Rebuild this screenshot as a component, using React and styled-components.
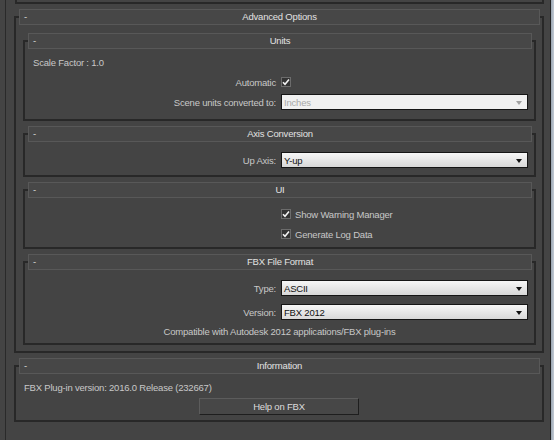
import React from "react";
import styled, { createGlobalStyle } from "styled-components";

const Global = createGlobalStyle`
  html, body { margin: 0; padding: 0; background: #444444; }
  body {
    font-family: "Liberation Sans", Arial, sans-serif;
    font-size: 9.5px;
    letter-spacing: -0.2px;
    color: #c8c8c8;
  }
  * { box-sizing: border-box; }
`;

const Window = styled.div`
  display: flex;
  width: 554px;
  height: 440px;
  overflow: hidden;
  background: #444444;
`;

const Main = styled.div`
  flex: 1;
  padding-left: 5px;
  display: flex;
`;

const Column = styled.div`
  flex: 1;
  border-left: 1px solid #2a2a2a;
  border-right: 1px solid #242424;
  display: flex;
  flex-direction: column;
`;

const Edge = styled.div`
  width: 3px;
  background: linear-gradient(to right, #9aa6b2, #c4ccd6);
`;

const Stub = styled.div`
  height: 4px;
  margin: 0 6px 0 9px;
  border: 2px solid #282828;
  border-top: none;
`;

const Frame = styled.div`
  margin: ${(p) => p.$mt}px ${(p) => p.$mr}px 0 ${(p) => p.$ml}px;
  border: 2px solid #282828;
  display: flex;
  flex-direction: column;
  padding-bottom: ${(p) => p.$pb}px;
`;

const Header = styled.div`
  position: relative;
  height: 16px;
  margin: -9px 2px 0 3px;
  background: #474747;
  border: 1px solid #585858;
  display: flex;
  align-items: center;
  justify-content: center;
  color: #e2e2e2;
  line-height: 14px;
`;

const Dash = styled.span`
  position: absolute;
  left: 4px;
  top: 0;
  color: #d8d8d8;
`;

const Fields = styled.div`
  display: grid;
  grid-template-columns: 1fr 247px;
  column-gap: 5px;
  row-gap: ${(p) => p.$gap}px;
  grid-auto-rows: 16px;
  padding: ${(p) => p.$pt}px 6px ${(p) => p.$pb}px 0;
`;

const Full = styled.div`
  grid-column: 1 / -1;
  display: flex;
  align-items: center;
  padding-left: 8px;
  white-space: nowrap;
`;

const Note = styled.div`
  height: 14px;
  margin: 4px 0 5px;
  display: flex;
  align-items: center;
  justify-content: center;
  white-space: nowrap;
`;

const Label = styled.div`
  display: flex;
  align-items: center;
  justify-content: flex-end;
  white-space: nowrap;
  color: #c8c8c8;
`;

const Control = styled.div`
  display: flex;
  align-items: center;
  gap: 4px;
  white-space: nowrap;
`;

const Select = styled.div`
  position: relative;
  width: 100%;
  height: 16px;
  border: 1px solid #151515;
  background: ${(p) =>
    p.$disabled ? "#f0f0f0" : "linear-gradient(#f6f6f6, #e4e4e4 60%, #d8d8d8)"};
  color: ${(p) => (p.$disabled ? "#a8a8a8" : "#101010")};
  display: flex;
  align-items: center;
  padding-left: 2px;
`;

const Arrow = styled.span`
  position: absolute;
  right: 5px;
  top: 6px;
  width: 0;
  height: 0;
  border-left: 3.5px solid transparent;
  border-right: 3.5px solid transparent;
  border-top: 4px solid ${(p) => (p.$disabled ? "#a0a0a0" : "#111")};
`;

const Box = styled.span`
  width: 10px;
  height: 10px;
  background: #343434;
  border: 1px solid #6c6c6c;
  display: inline-flex;
  align-items: center;
  justify-content: center;
  flex: none;
`;

const InfoBody = styled.div`
  display: flex;
  flex-direction: column;
  padding: 6px 0 0 8px;
  gap: 4px;
`;

const InfoText = styled.div`
  height: 14px;
  display: flex;
  align-items: center;
  white-space: nowrap;
`;

const Button = styled.div`
  align-self: center;
  margin-left: -8px;
  width: 160px;
  height: 17px;
  background: #474747;
  border: 1px solid;
  border-color: #5c5c5c #1e1e1e #1e1e1e #5c5c5c;
  display: flex;
  align-items: center;
  justify-content: center;
  color: #dcdcdc;
`;

const Check = () => (
  <Box>
    <svg width="8" height="8" viewBox="0 0 8 8">
      <path d="M1 4.2 L3 6.3 L7 1.5" fill="none" stroke="#f2f2f2" strokeWidth="1.6" />
    </svg>
  </Box>
);

const Dropdown = ({ value, disabled }) => (
  <Select $disabled={disabled}>
    {value}
    <Arrow $disabled={disabled} />
  </Select>
);

const Rollout = ({ title, mt, ml, mr, pb = 0, children }) => (
  <Frame $mt={mt} $ml={ml} $mr={mr} $pb={pb}>
    <Header>
      <Dash>-</Dash>
      {title}
    </Header>
    {children}
  </Frame>
);

export default function App() {
  return (
    <Window>
      <Global />
      <Main>
        <Column>
          <Stub />
          <Rollout title="Advanced Options" mt={12} ml={8} mr={6} pb={6}>
            <Rollout title="Units" mt={15} ml={7} mr={6}>
              <Fields $gap={4} $pt={5} $pb={9}>
                <Full>Scale Factor : 1.0</Full>
                <Label>Automatic</Label>
                <Control>
                  <Check />
                </Control>
                <Label>Scene units converted to:</Label>
                <Control>
                  <Dropdown value="Inches" disabled />
                </Control>
              </Fields>
            </Rollout>
            <Rollout title="Axis Conversion" mt={12} ml={7} mr={6}>
              <Fields $gap={4} $pt={10} $pb={7}>
                <Label>Up Axis:</Label>
                <Control>
                  <Dropdown value="Y-up" />
                </Control>
              </Fields>
            </Rollout>
            <Rollout title="UI" mt={12} ml={7} mr={6}>
              <Fields $gap={4} $pt={8} $pb={5}>
                <Label />
                <Control>
                  <Check />
                  Show Warning Manager
                </Control>
                <Label />
                <Control>
                  <Check />
                  Generate Log Data
                </Control>
              </Fields>
            </Rollout>
            <Rollout title="FBX File Format" mt={12} ml={7} mr={6}>
              <Fields $gap={8} $pt={10} $pb={0}>
                <Label>Type:</Label>
                <Control>
                  <Dropdown value="ASCII" />
                </Control>
                <Label>Version:</Label>
                <Control>
                  <Dropdown value="FBX 2012" />
                </Control>
              </Fields>
              <Note>Compatible with Autodesk 2012 applications/FBX plug-ins</Note>
            </Rollout>
          </Rollout>
          <Rollout title="Information" mt={12} ml={8} mr={6} pb={5}>
            <InfoBody>
              <InfoText>FBX Plug-in version: 2016.0 Release (232667)</InfoText>
              <Button>Help on FBX</Button>
            </InfoBody>
          </Rollout>
        </Column>
      </Main>
      <Edge />
    </Window>
  );
}
